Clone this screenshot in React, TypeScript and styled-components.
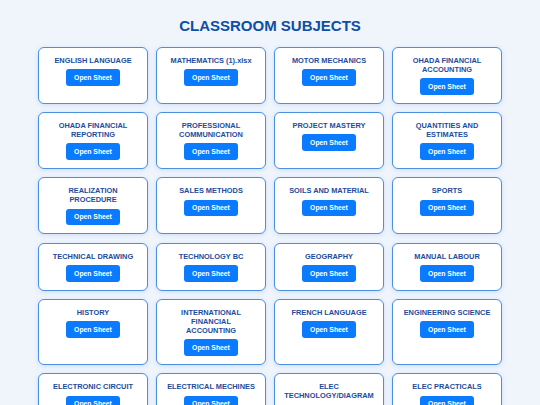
import React from "react";
import styled, { createGlobalStyle } from "styled-components";

const subjects = [
  "ENGLISH LANGUAGE",
  "MATHEMATICS (1).xlsx",
  "MOTOR MECHANICS",
  "OHADA FINANCIAL ACCOUNTING",
  "OHADA FINANCIAL REPORTING",
  "PROFESSIONAL COMMUNICATION",
  "PROJECT MASTERY",
  "QUANTITIES AND ESTIMATES",
  "REALIZATION PROCEDURE",
  "SALES METHODS",
  "SOILS AND MATERIAL",
  "SPORTS",
  "TECHNICAL DRAWING",
  "TECHNOLOGY BC",
  "GEOGRAPHY",
  "MANUAL LABOUR",
  "HISTORY",
  "INTERNATIONAL FINANCIAL ACCOUNTING",
  "FRENCH LANGUAGE",
  "ENGINEERING SCIENCE",
  "ELECTRONIC CIRCUIT",
  "ELECTRICAL MECHINES",
  "ELEC TECHNOLOGY/DIAGRAM",
  "ELEC PRACTICALS",
];

const GlobalStyle = createGlobalStyle`
  html, body {
    margin: 0;
    padding: 0;
    background: #f0f5fc;
    font-family: "Liberation Sans", Arial, sans-serif;
  }
`;

const Page = styled.div`
  padding: 17px 0 20px;
`;

const Heading = styled.h1`
  margin: 0 0 12.7px;
  font-size: 15px;
  line-height: 17px;
  font-weight: 700;
  text-align: center;
  color: #0d4ea6;
`;

const Grid = styled.div`
  width: 464px;
  margin: 0 auto;
  display: grid;
  grid-template-columns: repeat(4, 1fr);
  gap: 8.3px 8px;
`;

const Card = styled.div`
  display: flex;
  flex-direction: column;
  align-items: center;
  padding: 8px 8.8px;
  background: #ffffff;
  border: 1px solid #4a8fe0;
  border-radius: 6px;
  box-shadow: 0 1px 5px rgba(30, 110, 230, 0.18);
`;

const Title = styled.div`
  margin: 0 0 4.5px;
  font-size: 7.4px;
  line-height: 9px;
  font-weight: 700;
  text-align: center;
  color: #1c4c9c;
`;

const OpenButton = styled.button`
  border: none;
  border-radius: 3px;
  background: #0a7bff;
  color: #ffffff;
  font-family: inherit;
  font-size: 6.8px;
  line-height: 7.5px;
  font-weight: 700;
  padding: 4.5px 8px;
  cursor: pointer;
`;

const App = () => {
  return (
    <Page>
      <GlobalStyle />
      <Heading>CLASSROOM SUBJECTS</Heading>
      <Grid>
        {subjects.map((name) => (
          <Card key={name}>
            <Title>{name}</Title>
            <OpenButton>Open Sheet</OpenButton>
          </Card>
        ))}
      </Grid>
    </Page>
  );
};

export default App;
